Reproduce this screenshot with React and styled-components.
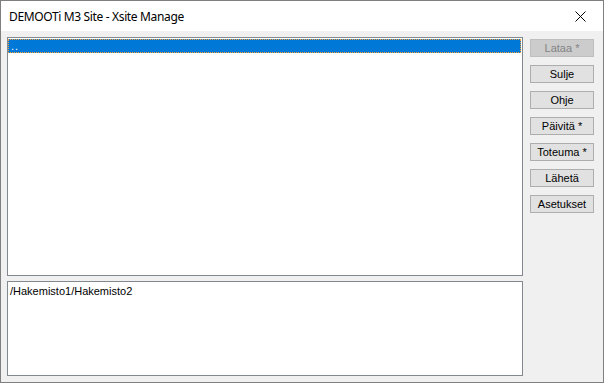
import React from "react";
import styled, { createGlobalStyle } from "styled-components";

const GlobalStyle = createGlobalStyle`
  html, body {
    margin: 0;
    padding: 0;
    background: #ffffff;
  }
`;

const buttons = [
  { label: "Lataa *", disabled: true },
  { label: "Sulje" },
  { label: "Ohje" },
  { label: "Päivitä *" },
  { label: "Toteuma *" },
  { label: "Lähetä" },
  { label: "Asetukset" },
];

function App() {
  return (
    <>
      <GlobalStyle />
      <Window>
        <TitleBar>
          <Title>DEMOOTi M3 Site - Xsite Manage</Title>
          <CloseButton>
            <svg width="11" height="11" viewBox="0 0 11 11">
              <path d="M0.5 0.5 L10.5 10.5 M10.5 0.5 L0.5 10.5" stroke="#000" strokeWidth="1" />
            </svg>
          </CloseButton>
        </TitleBar>
        <Body>
          <Lists>
            <ListBox height={239}>
              <Row selected>..</Row>
            </ListBox>
            <ListBox height={95}>
              <PathText>/Hakemisto1/Hakemisto2</PathText>
            </ListBox>
          </Lists>
          <Buttons>
            {buttons.map((b) => (
              <Button key={b.label} disabled={b.disabled}>
                {b.label}
              </Button>
            ))}
          </Buttons>
        </Body>
      </Window>
    </>
  );
}

export default App;

const Window = styled.div`
  width: 604px;
  height: 383px;
  box-sizing: border-box;
  border: 1px solid #7f7f7f;
  background: #f0f0f0;
  display: flex;
  flex-direction: column;
  font-family: "Liberation Sans", Arial, sans-serif;
`;

const TitleBar = styled.div`
  height: 30px;
  background: #ffffff;
  display: flex;
  align-items: center;
  justify-content: space-between;
  padding-left: 8px;
`;

const Title = styled.div`
  font-family: "Noto Sans", "Open Sans", sans-serif;
  font-size: 12px;
  letter-spacing: -0.35px;
  color: #000;
  margin-top: 1px;
`;

const CloseButton = styled.div`
  width: 46px;
  height: 30px;
  display: flex;
  align-items: center;
  justify-content: center;
  margin-top: 1px;
`;

const Body = styled.div`
  flex: 1;
  display: flex;
  padding: 6px 9px 6px 6px;
  gap: 7px;
`;

const Lists = styled.div`
  width: 516px;
  display: flex;
  flex-direction: column;
  gap: 5px;
`;

const ListBox = styled.div`
  height: ${(p) => p.height}px;
  box-sizing: border-box;
  border: 1px solid #828790;
  background: #ffffff;
  padding: 1px 1px 0 0;
`;

const Row = styled.div`
  height: 14px;
  box-sizing: border-box;
  background: ${(p) => (p.selected ? "#0078d7" : "transparent")};
  color: ${(p) => (p.selected ? "#ffffff" : "#000")};
  border: 1px dotted ${(p) => (p.selected ? "#f7a036" : "transparent")};
  font-size: 11px;
  line-height: 13px;
  padding-left: 2px;
  letter-spacing: 1px;
`;

const PathText = styled.div`
  font-size: 11px;
  line-height: 14px;
  color: #000;
  padding: 1px 0 0 2px;
`;

const Buttons = styled.div`
  display: flex;
  flex-direction: column;
  gap: 8px;
  padding-top: 2px;
`;

const Button = styled.div`
  width: 64px;
  height: 18px;
  box-sizing: border-box;
  border: 1px solid ${(p) => (p.disabled ? "#bfbfbf" : "#adadad")};
  background: ${(p) => (p.disabled ? "#cccccc" : "#e1e1e1")};
  color: ${(p) => (p.disabled ? "#838383" : "#000")};
  font-size: 11px;
  line-height: 16px;
  text-align: center;
`;
